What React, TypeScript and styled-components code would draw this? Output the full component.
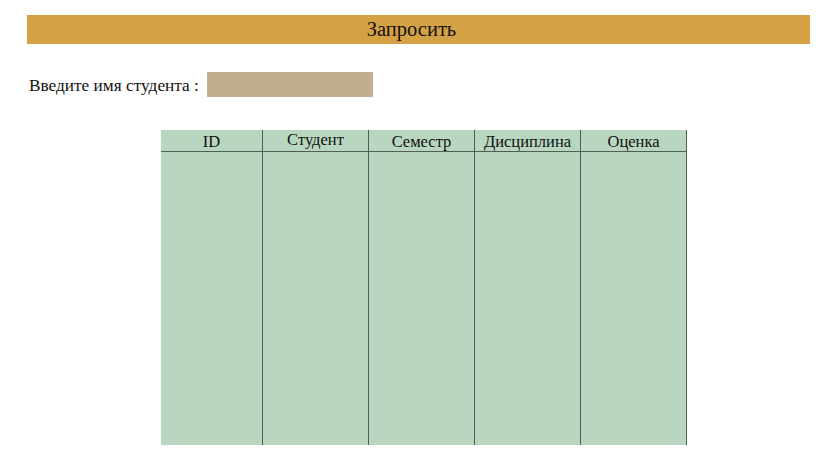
import React from "react";
import styled, { createGlobalStyle } from "styled-components";

const Global = createGlobalStyle`
  html, body { margin: 0; padding: 0; background: #ffffff; }
  body { font-family: "Liberation Serif", "Times New Roman", serif; color: #111; }
`;

const serif = `"Liberation Serif", "Times New Roman", serif`;

const Page = styled.div`
  width: 837px;
  height: 470px;
  box-sizing: border-box;
  padding: 15px 0 0 27px;
  display: flex;
  flex-direction: column;
  font-family: ${serif};
`;

const QueryBar = styled.button`
  width: 783px;
  height: 29px;
  border: none;
  margin: 0;
  padding: 0 14px 0 0;
  background: #d4a244;
  font-family: ${serif};
  font-size: 20.5px;
  color: #111;
  display: flex;
  align-items: center;
  justify-content: center;
`;

const InputRow = styled.div`
  display: flex;
  align-items: center;
  margin-top: 28px;
  padding-left: 2px;
  gap: 8px;
  height: 25px;
`;

const Label = styled.span`
  font-family: ${serif};
  font-size: 17.3px;
  white-space: nowrap;
  transform: translateY(1px);
`;

const NameInput = styled.div`
  width: 166px;
  height: 25px;
  background: #c1ae90;
`;

const Table = styled.div`
  margin-top: 33px;
  margin-left: 134px;
  width: 526px;
  height: 315px;
  background: #b8d6c0;
  display: grid;
  grid-template-columns: 102px 106px 106px 106px 106px;
`;

const Column = styled.div`
  display: flex;
  flex-direction: column;
  border-right: 1px solid #4f5f54;
`;

const HeaderCell = styled.div`
  height: 21px;
  border-bottom: 1px solid #4f5f54;
  display: flex;
  align-items: center;
  justify-content: center;
`;

const Title = styled.span<{ $shift: number }>`
  font-family: ${serif};
  font-size: 16.5px;
  white-space: nowrap;
  transform: translateY(${(p) => p.$shift}px);
`;

const columns: { title: string; shift: number }[] = [
  { title: "ID", shift: 1 },
  { title: "Студент", shift: -1 },
  { title: "Семестр", shift: 1 },
  { title: "Дисциплина", shift: 1 },
  { title: "Оценка", shift: 1 },
];

export default function App() {
  return (
    <>
      <Global />
      <Page>
        <QueryBar>Запросить</QueryBar>
        <InputRow>
          <Label>Введите имя студента :</Label>
          <NameInput />
        </InputRow>
        <Table>
          {columns.map((c) => (
            <Column key={c.title}>
              <HeaderCell>
                <Title $shift={c.shift}>{c.title}</Title>
              </HeaderCell>
            </Column>
          ))}
        </Table>
      </Page>
    </>
  );
}
